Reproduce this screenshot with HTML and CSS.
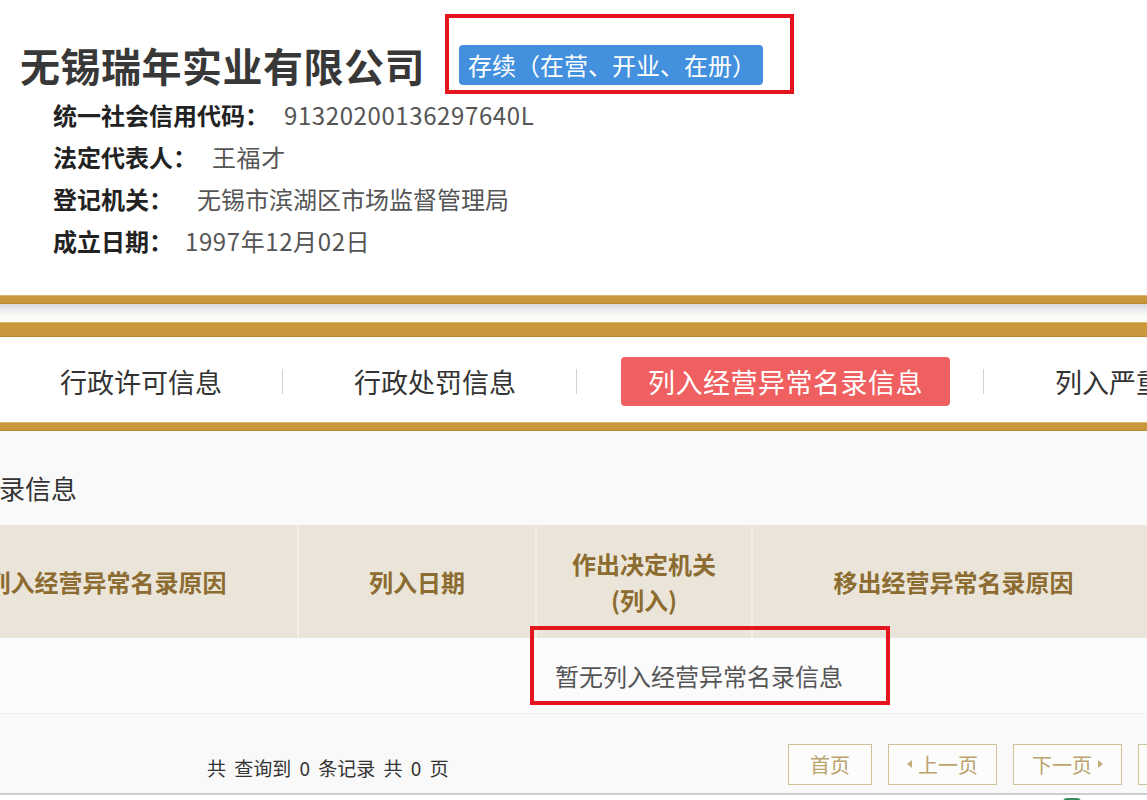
FILE: index.html
```html
<!DOCTYPE html>
<html lang="zh-CN">
<head>
<meta charset="utf-8">
<title>无锡瑞年实业有限公司</title>
<link rel="stylesheet" href="styles.css">
</head>
<body>
<div class="page">
  <header class="header">
    <div class="title-row">
      <h1 class="company">无锡瑞年实业有限公司</h1>
      <div class="status-wrap">
        <span class="status">存续（在营、开业、在册）</span>
        <span class="mark mark-status"></span>
      </div>
    </div>
    <ul class="info">
      <li><span class="label">统一社会信用代码：</span><span class="value">91320200136297640L</span></li>
      <li><span class="label">法定代表人：</span><span class="value">王福才</span></li>
      <li><span class="label">登记机关：</span><span class="value value-wide">无锡市滨湖区市场监督管理局</span></li>
      <li><span class="label">成立日期：</span><span class="value value-narrow">1997年12月02日</span></li>
    </ul>
  </header>

  <div class="band band-thin"></div>
  <div class="band-gap"></div>
  <div class="band band-thick"></div>

  <nav class="tabs">
    <a class="tab">行政许可信息</a>
    <span class="sep"></span>
    <a class="tab">行政处罚信息</a>
    <span class="sep"></span>
    <a class="tab active">列入经营异常名录信息</a>
    <span class="sep"></span>
    <a class="tab">列入严重违法失信企业名单信息</a>
  </nav>

  <div class="band band-thin"></div>

  <main class="content">
    <h2 class="section-title">列入经营异常名录信息</h2>
    <table class="grid">
      <colgroup>
        <col class="c1"><col class="c2"><col class="c3"><col class="c4">
      </colgroup>
      <thead>
        <tr>
          <th>列入经营异常名录原因</th>
          <th>列入日期</th>
          <th>作出决定机关<br>(列入)</th>
          <th>移出经营异常名录原因</th>
        </tr>
      </thead>
      <tbody>
        <tr>
          <td colspan="4" class="empty">
            <span class="empty-text">暂无列入经营异常名录信息<span class="mark mark-empty"></span></span>
          </td>
        </tr>
      </tbody>
    </table>
    <div class="pager">
      <div class="total">共 查询到 0 条记录 共 0 页</div>
      <div class="buttons">
        <a class="pbtn">首页</a>
        <a class="pbtn pbtn-tri"><span class="tri tri-left"></span>上一页</a>
        <a class="pbtn pbtn-tri">下一页<span class="tri tri-right"></span></a>
        <a class="pbtn">末页</a>
      </div>
    </div>
  </main>
  <footer class="footer"><span class="foot-icon"></span></footer>
</div>
</body>
</html>
```

FILE: styles.css
```css
* { box-sizing: border-box; }
html, body {
  margin: 0;
  padding: 0;
  background: #ffffff;
  overflow: hidden;
}
body {
  font-family: "Noto Sans CJK SC", "Noto Sans", sans-serif;
  color: #333;
  width: 1147px;
  height: 800px;
}
.page { width: 1147px; height: 800px; overflow: hidden; }

.header { padding-left: 20px; height: 295px; padding-top: 42px; }
.title-row { display: flex; align-items: center; height: 46px; }
.company {
  margin: 0;
  font-size: 40px;
  line-height: 46px;
  font-weight: 700;
  color: #383838;
  letter-spacing: 0.5px;
}
.status-wrap { position: relative; margin-left: 34px; }
.status {
  display: block;
  background: #4391de;
  color: #fff;
  font-size: 24px;
  line-height: 40px;
  height: 40px;
  padding: 0 7px 0 9px;
  border-radius: 4px;
  white-space: nowrap;
}
.mark {
  position: absolute;
  border: 4px solid #e5151f;
  pointer-events: none;
}
.mark-status { left: -14px; top: -31px; right: -31px; bottom: -9px; }

.info { list-style: none; margin: 6px 0 0 33px; padding: 0; }
.info li { height: 42px; line-height: 42px; font-size: 24px; white-space: nowrap; }
.label { font-weight: 700; color: #222; }
.value { color: #555; margin-left: 15px; letter-spacing: 0.6px; }
.value-wide { margin-left: 24px; letter-spacing: 0; }
.value-narrow { margin-left: 12px; }

.band { background: #c9983c; border-top: 1px solid #dcb56a; border-bottom: 1px solid #b98a34; }
.band-thin { height: 9px; }
.band-thick { height: 15px; }
.band-gap { height: 18px; background: linear-gradient(#d9d5dc, #efedf0 35%, #fbfbf8 70%, #fdfcf6); }

.tabs {
  display: flex;
  align-items: center;
  height: 85px;
  padding: 3px 0 0 33px;
  background: #fff;
  white-space: nowrap;
}
.tab {
  display: block;
  font-size: 27px;
  line-height: 49px;
  height: 49px;
  padding: 0 27px;
  color: #333;
  border-radius: 4px;
  flex: none;
}
.tab.active { background: #f06061; color: #fff; letter-spacing: 0.5px; }
.sep { flex: none; width: 1px; height: 25px; background: #d2d2d2; margin: 0 44px 0 33px; }

.content { background: #f9f9f9; height: 362px; padding-top: 39px; }
.section-title {
  margin: 0 0 0 -183px;
  font-size: 26px;
  line-height: 36px;
  font-weight: 400;
  color: #333;
  white-space: nowrap;
}
.grid {
  margin: 19px 0 0 -84px;
  border-collapse: collapse;
  table-layout: fixed;
  width: 1238px;
}
.c1 { width: 382px; }
.c2 { width: 238px; }
.c3 { width: 216px; }
.c4 { width: 402px; }
.grid th {
  height: 113px;
  padding: 0;
  background: #ebe5d9;
  color: #8c6c30;
  font-size: 24px;
  line-height: 36px;
  font-weight: 700;
  text-align: center;
  border-left: 2px solid #f3efe7;
  white-space: nowrap;
}
.grid th:first-child { border-left: none; }
.grid td.empty {
  height: 75px;
  padding: 0 0 0 639px;
  background: #fbfbfb;
  border-bottom: 1px solid #ececec;
  font-size: 24px;
  color: #555;
}
.empty-text { position: relative; display: inline-block; line-height: 34px; }
.mark-empty { left: -25px; top: -33px; right: -47px; bottom: -12px; }

.pager { display: flex; align-items: center; height: 79px; padding-top: 22px; }
.total {
  flex: none;
  width: 788px;
  padding-left: 207px;
  font-size: 19px;
  color: #333;
  word-spacing: 4px;
  padding-top: 6px;
  white-space: nowrap;
}
.buttons { display: flex; gap: 16px; flex: none; }
.pbtn {
  display: flex;
  align-items: center;
  height: 41px;
  padding: 0 21px;
  border: 1px solid #cfc299;
  background: #fcfcfa;
  color: #bba36e;
  font-size: 20px;
  white-space: nowrap;
}
.pbtn-tri { padding: 0 18px; }
.tri { display: inline-block; width: 0; height: 0; border-top: 4px solid transparent; border-bottom: 4px solid transparent; }
.tri-left { border-right: 5px solid #c3ad7c; margin-right: 6px; }
.tri-right { border-left: 5px solid #c3ad7c; margin-left: 6px; }

.footer { height: 8px; border-top: 2px solid #cfcfcf; background: #fff; position: relative; }
.foot-icon {
  position: absolute;
  left: 1063px;
  top: 3px;
  width: 18px;
  height: 12px;
  border: 2px solid #3f8a5c;
  border-radius: 4px;
  background: #e4f2e8;
}
```
